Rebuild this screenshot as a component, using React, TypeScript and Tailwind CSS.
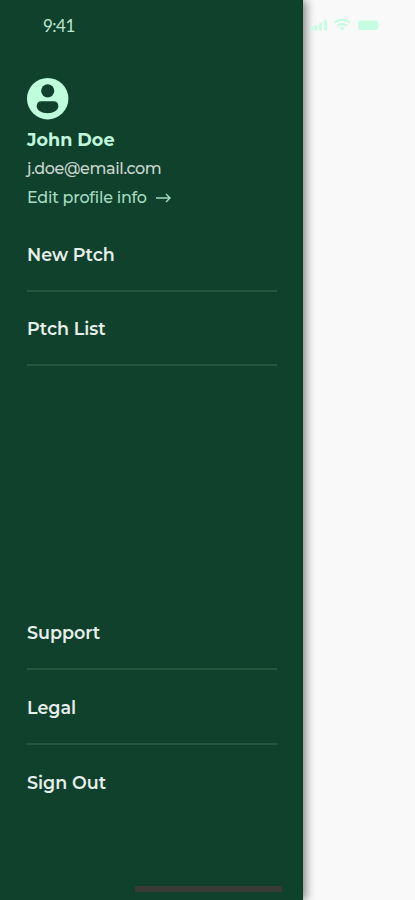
import type { ReactNode } from "react";

function NavItem({ children, className = "h-[74px]" }: { children: ReactNode; className?: string }) {
  return (
    <a className={`flex shrink-0 items-center whitespace-nowrap text-[17.5px] font-semibold leading-6 text-[#e6efea] ${className}`}>
      {children}
    </a>
  );
}

function Divider() {
  return <div className="-mt-[2px] h-[2px] w-[250px] shrink-0 bg-[#26543f]" />;
}

function StatusIcons() {
  return (
    <svg width="72" height="16" viewBox="0 0 72 16" fill="#c5fde2">
      <rect x="0" y="9.5" width="3" height="4" rx="1" />
      <rect x="4.5" y="8" width="3" height="5.5" rx="1" />
      <rect x="9" y="5.5" width="3" height="8" rx="1" />
      <rect x="14" y="2.5" width="3" height="11" rx="1" />
      <g fill="none" stroke="#c5fde2" strokeWidth="2">
        <path d="M24.5 5.8C29 1.8 35.5 1.8 40 5.8" />
        <path d="M27.3 8.8C30 6.4 34.5 6.4 37.2 8.8" />
      </g>
      <path d="M29.5 10.8Q32.2 8.8 34.9 10.8L32.2 13.8Z" />
      <rect x="48" y="3.5" width="20" height="9.5" rx="2" />
      <path d="M69 6.5Q70.8 8.3 69 10.1Z" />
    </svg>
  );
}

export default function App() {
  return (
    <div className="flex h-[900px] w-[415px] overflow-hidden bg-[#f9f9f9] font-['Montserrat','Inter',sans-serif]">
      <aside className="z-10 flex w-[303px] shrink-0 flex-col border-r border-[#093d1c] bg-[#10412d] pl-[27px] shadow-[3px_0_9px_rgba(0,0,0,0.48)]">
        <div className="mt-[14px] ml-4 h-6 font-['Lato',sans-serif] text-[17px] leading-6 tracking-[-0.5px] text-[#bce5d0]">9:41</div>
        <svg className="mt-[40px] shrink-0" width="42" height="42" viewBox="0 0 42 42">
          <circle cx="20.7" cy="20.7" r="20.7" fill="#c0fddd" />
          <circle cx="20.7" cy="12.8" r="6.6" fill="#10412d" />
          <path d="M14.5 23.2H26.5Q31.3 23.2 31.3 28.3C31.3 32.5 26.5 35.2 20.5 35.2S9.7 32.5 9.7 28.3Q9.7 23.2 14.5 23.2Z" fill="#10412d" />
        </svg>
        <div className="mt-[8px] h-6 whitespace-nowrap text-[17.6px] font-bold leading-6 text-[#c0f7dc]">John Doe</div>
        <div className="mt-[5px] h-6 whitespace-nowrap text-[16px] font-medium leading-6 tracking-[-0.38px] text-[#c9d6cf]">j.doe@email.com</div>
        <div className="mt-[5px] flex h-6 items-center whitespace-nowrap text-[16px] font-medium leading-6 tracking-[-0.25px] text-[#a5dcc0]">
          <span className="w-[128px]">Edit profile info</span>
          <svg width="17" height="12" viewBox="0 0 17 12" fill="none" stroke="currentColor" strokeWidth="1.4">
            <path d="M1 6H15M11 2L15 6L11 10" />
          </svg>
        </div>
        <nav className="mt-[8px] flex flex-col">
          <NavItem>New Ptch</NavItem>
          <Divider />
          <NavItem>Ptch List</NavItem>
          <Divider />
        </nav>
        <nav className="mt-[230px] flex flex-col">
          <NavItem>Support</NavItem>
          <Divider />
          <NavItem className="h-[75px]">Legal</NavItem>
          <Divider />
          <NavItem className="h-[76px]">Sign Out</NavItem>
        </nav>
        <div className="mt-auto mb-[8px] ml-[108px] h-[6px] w-[147px] shrink-0 bg-[#3a3a36]" />
      </aside>
      <div className="z-20 ml-[7px] mt-[17px]">
        <StatusIcons />
      </div>
    </div>
  );
}
